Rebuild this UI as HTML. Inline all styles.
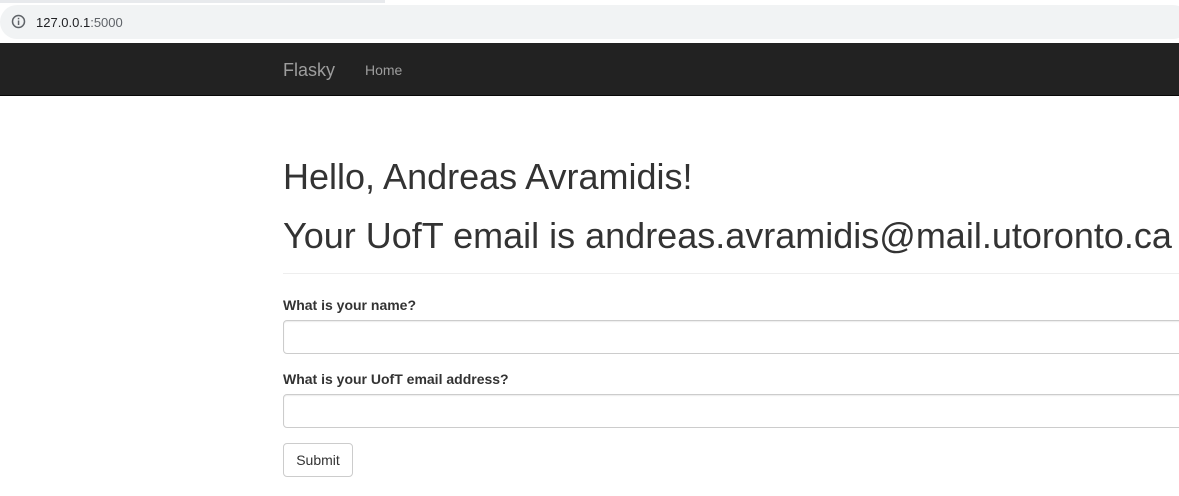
<!DOCTYPE html>
<html><head><style>
body{margin:0;width:1179px;height:496px;overflow:hidden;background:#fff;font-family:"Liberation Sans",Arial,sans-serif;color:#333;position:relative}
.abs{position:absolute}
</style></head><body>
<div class="abs" style="left:0;top:0;width:385px;height:3px;background:#e8eaed"></div>
<div class="abs" style="left:0;top:5px;width:1190px;height:34px;background:#f1f3f4;border-radius:17px"></div>
<svg class="abs" style="left:11px;top:14px" width="15" height="15" viewBox="0 0 15 15"><circle cx="7.5" cy="7.5" r="6" fill="none" stroke="#5f6368" stroke-width="1.5"/><rect x="6.8" y="6.5" width="1.5" height="4.5" fill="#5f6368"/><rect x="6.8" y="3.8" width="1.5" height="1.5" fill="#5f6368"/></svg>
<div class="abs" style="left:36px;top:15px;font-size:13px;color:#202124">127.0.0.1<span style="color:#5f6368">:5000</span></div>
<div class="abs" style="left:0;top:43px;width:1179px;height:52px;background:#222;border-bottom:1px solid #080808"></div>
<div class="abs" style="left:283px;top:60px;font-size:18px;color:#9d9d9d">Flasky</div>
<div class="abs" style="left:365px;top:62px;font-size:14px;color:#9d9d9d">Home</div>
<div class="abs" style="left:283px;top:156px;font-size:36px;white-space:nowrap">Hello, Andreas Avramidis!</div>
<div class="abs" style="left:283px;top:215px;font-size:36px;white-space:nowrap">Your UofT email is andreas.avramidis@mail.utoronto.ca</div>
<div class="abs" style="left:283px;top:273px;width:900px;height:1px;background:#eee"></div>
<div class="abs" style="left:283px;top:297px;font-size:14px;font-weight:bold">What is your name?</div>
<div class="abs" style="left:283px;top:320px;width:910px;height:32px;border:1px solid #ccc;border-radius:4px;box-shadow:inset 0 1px 1px rgba(0,0,0,.075)"></div>
<div class="abs" style="left:283px;top:371px;font-size:14px;font-weight:bold">What is your UofT email address?</div>
<div class="abs" style="left:283px;top:394px;width:910px;height:32px;border:1px solid #ccc;border-radius:4px;box-shadow:inset 0 1px 1px rgba(0,0,0,.075)"></div>
<div class="abs" style="left:283px;top:443px;width:68px;height:32px;border:1px solid #ccc;border-radius:4px;font-size:14px;line-height:32px;text-align:center">Submit</div>
</body></html>
